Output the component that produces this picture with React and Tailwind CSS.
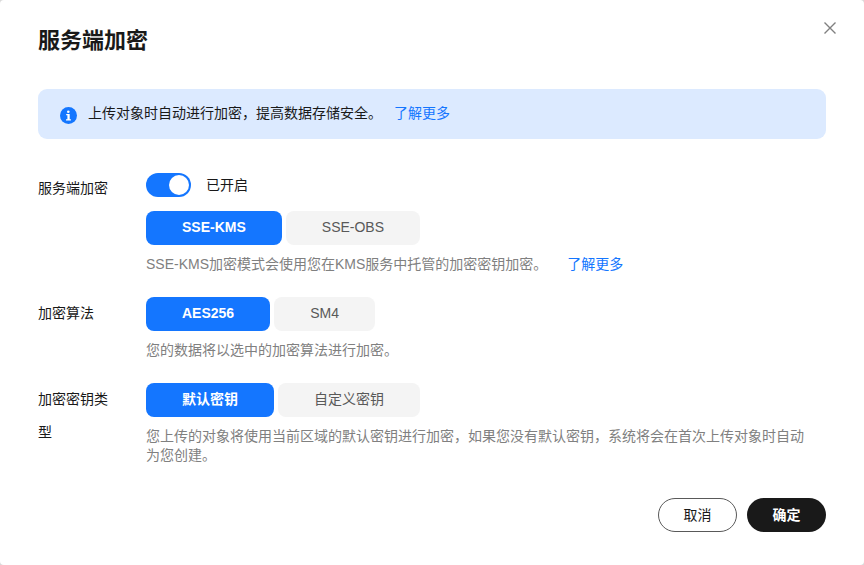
import { useState } from "react";

const focusRing =
  "focus-visible:outline-2 focus-visible:outline-offset-2 focus-visible:outline-[#1476ff]";

function OptionGroup({ labelId, options, value, onChange }) {
  return (
    <div role="group" aria-labelledby={labelId} className="flex flex-wrap gap-1">
      {options.map((option) => {
        const selected = option === value;
        return (
          <button
            key={option}
            type="button"
            aria-pressed={selected}
            onClick={() => onChange(option)}
            className={`h-[34px] cursor-pointer rounded-lg px-9 pb-0.5 ${focusRing} ${
              selected ? "bg-[#1476ff] font-bold text-white" : "bg-[#f4f4f4] text-[#595959]"
            }`}
          >
            {option}
          </button>
        );
      })}
    </div>
  );
}

function Row({ id, label, children }) {
  return (
    <div className="flex gap-7">
      <div id={id} className="w-20 shrink-0 leading-[33px]">
        {label}
      </div>
      <div className="min-w-0 flex-1">{children}</div>
    </div>
  );
}

function Hint({ children }) {
  return <p className="mt-2.5 pr-4 leading-[19px] text-[#808080]">{children}</p>;
}

function InfoIcon() {
  return (
    <svg viewBox="0 0 17 17" className="mt-0.5 size-[17px] shrink-0" aria-hidden="true">
      <circle cx="8.5" cy="8.5" r="8.5" fill="#1476ff" />
      <circle cx="8.3" cy="4.7" r="1.3" fill="#fff" />
      <path d="M6.2 6.9h3.5v5.3h1.2v1.4H6v-1.4h1.4V8.3H6.2z" fill="#fff" />
    </svg>
  );
}

export default function App() {
  const [enabled, setEnabled] = useState(true);
  const [mode, setMode] = useState("SSE-KMS");
  const [algorithm, setAlgorithm] = useState("AES256");
  const [keyType, setKeyType] = useState("默认密钥");

  return (
    <div
      lang="zh-CN"
      className="min-h-screen bg-[#d9d9d9] font-['Liberation_Sans','Noto_Sans_CJK_SC',sans-serif] text-[14px] text-[#191919]"
    >
      <main
        role="dialog"
        aria-labelledby="dialog-title"
        className="flex min-h-screen flex-col rounded-sm bg-white px-[38px] pt-5 pb-[33px]"
      >
        <header className="flex items-start justify-between">
          <h1 id="dialog-title" className="text-[22px] leading-[41px] font-bold">
            服务端加密
          </h1>
          <button
            type="button"
            aria-label="关闭"
            className={`-mr-3 flex size-4 cursor-pointer items-center justify-center text-[#808080] ${focusRing}`}
          >
            <svg viewBox="0 0 12 12" className="size-3" fill="none" stroke="currentColor" strokeWidth="1.4">
              <path d="M0.5 0.5l11 11M11.5 0.5l-11 11" />
            </svg>
          </button>
        </header>

        <div className="mt-7 flex items-center gap-[11px] rounded-[9px] bg-[#dceaff] px-[22px] py-3.5 leading-5">
          <InfoIcon />
          <p className="pb-0.5">
            上传对象时自动进行加密，提高数据存储安全。
            <a href="#encryption" className="ml-3 text-[#1476ff]">
              了解更多
            </a>
          </p>
        </div>

        <div className="mt-[33px] flex flex-col gap-[23px]">
          <Row id="encryption-label" label={<label htmlFor="encryption-switch">服务端加密</label>}>
            <div className="mb-[13px] flex h-[26px] items-center gap-[15px]">
              <span className="relative h-6 w-[45px]">
                <input
                  id="encryption-switch"
                  type="checkbox"
                  role="switch"
                  checked={enabled}
                  onChange={(event) => setEnabled(event.target.checked)}
                  className={`peer block h-6 w-[45px] cursor-pointer appearance-none rounded-full bg-[#c2c2c2] checked:bg-[#1476ff] ${focusRing}`}
                />
                <span className="pointer-events-none absolute top-0.5 left-0.5 size-5 rounded-full bg-white peer-checked:left-[23px]" />
              </span>
              <span>{enabled ? "已开启" : "已关闭"}</span>
            </div>
            <OptionGroup
              labelId="encryption-label"
              options={["SSE-KMS", "SSE-OBS"]}
              value={mode}
              onChange={setMode}
            />
            <Hint>
              SSE-KMS加密模式会使用您在KMS服务中托管的加密密钥加密。
              <a href="#kms" className="ml-5 text-[#1476ff]">
                了解更多
              </a>
            </Hint>
          </Row>

          <Row id="algorithm-label" label="加密算法">
            <OptionGroup
              labelId="algorithm-label"
              options={["AES256", "SM4"]}
              value={algorithm}
              onChange={setAlgorithm}
            />
            <Hint>您的数据将以选中的加密算法进行加密。</Hint>
          </Row>

          <Row id="key-label" label="加密密钥类型">
            <OptionGroup
              labelId="key-label"
              options={["默认密钥", "自定义密钥"]}
              value={keyType}
              onChange={setKeyType}
            />
            <Hint>
              您上传的对象将使用当前区域的默认密钥进行加密，如果您没有默认密钥，系统将会在首次上传对象时自动为您创建。
            </Hint>
          </Row>
        </div>

        <footer className="mt-[33px] flex justify-end gap-2.5">
          <button
            type="button"
            className={`h-[34px] w-[79px] cursor-pointer rounded-full border border-[#595959] bg-white ${focusRing}`}
          >
            取消
          </button>
          <button
            type="button"
            className={`h-[34px] w-[79px] cursor-pointer rounded-full bg-[#191919] font-bold text-white ${focusRing}`}
          >
            确定
          </button>
        </footer>
      </main>
    </div>
  );
}
